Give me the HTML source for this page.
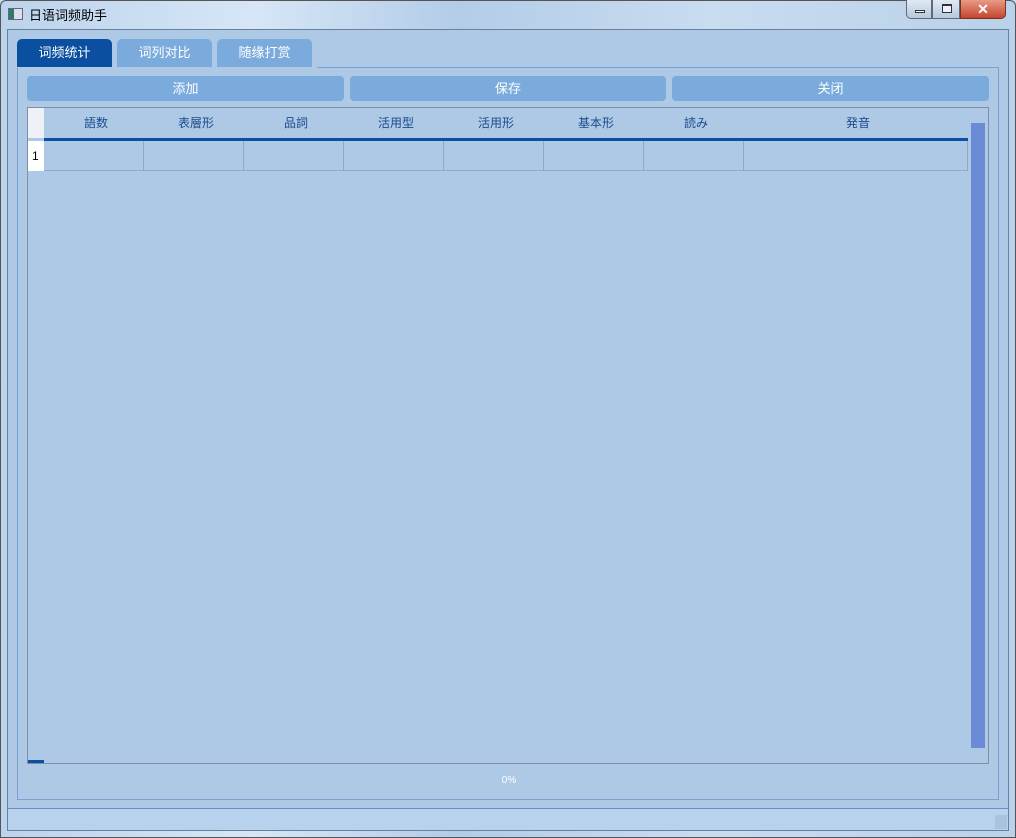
<!DOCTYPE html><html><head><meta charset="utf-8"><style>
*{margin:0;padding:0;box-sizing:border-box}
body{width:1016px;height:838px;background:#c4d8ee;font-family:"Liberation Sans","Noto Sans CJK SC",sans-serif;position:relative;overflow:hidden}
.a{position:absolute}
.frame{left:0;top:0;width:1016px;height:838px;border:1px solid #555;border-radius:6px 6px 0 0;background:linear-gradient(90deg,#bcd3ec,#d6e6f6 25%,#b3cce8 45%,#c9dcf0 70%,#b9d1ea)}
.client{left:7px;top:29px;width:1002px;height:802px;background:#adc9e6;border:1px solid #6b7f99}
.tab{top:39px;height:28px;color:#fff;font-size:13px;text-align:center;line-height:28px;border-radius:5px 5px 0 0;background:#7aabdc}
.btn{top:76px;height:25px;background:#7aabdc;border-radius:4px;color:#fff;font-size:13px;text-align:center;line-height:25px}
.hd{top:108px;height:30px;line-height:30px;text-align:center;font-size:12px;color:#1c4b8c;padding-left:4px}
.cell{top:141px;height:30px;border-right:1px solid #8fa9c7;border-bottom:1px solid #8fa9c7}
</style></head><body>
<div class="a frame"></div>
<div class="a" style="left:8px;top:8px;width:15px;height:12px;border:1px solid #667;background:linear-gradient(90deg,#2e7a6a 40%,#dde 40%)"></div>
<div class="a" style="left:29px;top:5px;font-size:13px;color:#000">日语词频助手</div>
<div class="a" style="left:906px;top:0;width:26px;height:19px;border:1px solid #667;border-top:none;border-radius:0 0 0 5px;background:linear-gradient(#dfe9f5,#b7c9de)"><div class="a" style="left:8px;top:10px;width:10px;height:3px;border:1px solid #333;background:#fff"></div></div>
<div class="a" style="left:932px;top:0;width:28px;height:19px;border:1px solid #667;border-top:none;background:linear-gradient(#dfe9f5,#b7c9de)"><div class="a" style="left:9px;top:4px;width:10px;height:9px;border:1px solid #333;border-top-width:2px;background:#eef"></div></div>
<div class="a" style="left:960px;top:0;width:46px;height:19px;border:1px solid #7a3020;border-top:none;border-radius:0 0 5px 0;background:linear-gradient(#e99a86,#c64530);color:#fff;font-weight:bold;font-size:14px;text-align:center;line-height:18px">✕</div>
<div class="a client"></div>
<div class="a tab" style="left:17px;width:95px;background:#0a4fa0">词频统计</div>
<div class="a tab" style="left:117px;width:95px">词列对比</div>
<div class="a tab" style="left:217px;width:95px">随缘打赏</div>
<div class="a" style="left:17px;top:67px;width:982px;height:733px;border:1px solid #7aa0d0"></div>
<div class="a" style="left:17px;top:67px;width:300px;height:1px;background:#adc9e6"></div>
<div class="a btn" style="left:27px;width:317px">添加</div>
<div class="a btn" style="left:350px;width:316px">保存</div>
<div class="a btn" style="left:672px;width:317px">关闭</div>
<div class="a" style="left:27px;top:107px;width:962px;height:657px;border:1px solid #7f8ea4"></div>
<div class="a" style="left:28px;top:108px;width:16px;height:30px;background:#eef1f5"></div>
<div class="a" style="left:28px;top:141px;width:16px;height:30px;background:#fff;font-size:12px;line-height:30px;padding-left:4px">1</div>
<div class="a hd" style="left:44px;width:100px">語数</div>
<div class="a hd" style="left:144px;width:100px">表層形</div>
<div class="a hd" style="left:244px;width:100px">品詞</div>
<div class="a hd" style="left:344px;width:100px">活用型</div>
<div class="a hd" style="left:444px;width:100px">活用形</div>
<div class="a hd" style="left:544px;width:100px">基本形</div>
<div class="a hd" style="left:644px;width:100px">読み</div>
<div class="a hd" style="left:744px;width:224px">発音</div>
<div class="a" style="left:44px;top:138px;width:924px;height:3px;background:#0a4fa0"></div>
<div class="a cell" style="left:44px;width:100px"></div>
<div class="a cell" style="left:144px;width:100px"></div>
<div class="a cell" style="left:244px;width:100px"></div>
<div class="a cell" style="left:344px;width:100px"></div>
<div class="a cell" style="left:444px;width:100px"></div>
<div class="a cell" style="left:544px;width:100px"></div>
<div class="a cell" style="left:644px;width:100px"></div>
<div class="a cell" style="left:744px;width:224px"></div>
<div class="a" style="left:971px;top:123px;width:14px;height:625px;background:#6b8bd6"></div>
<div class="a" style="left:28px;top:760px;width:16px;height:3px;background:#0a4fa0"></div>
<div class="a" style="left:0;top:775px;width:1016px;text-align:center;font-size:10px;color:#fff;padding-left:2px">0%</div>
<div class="a" style="left:8px;top:808px;width:1000px;height:22px;border-top:1px solid #6b8fc4;background:#b8d2ee"></div>
<div class="a" style="left:995px;top:815px;width:12px;height:14px;background:#a9c3df"></div>
</body></html>
